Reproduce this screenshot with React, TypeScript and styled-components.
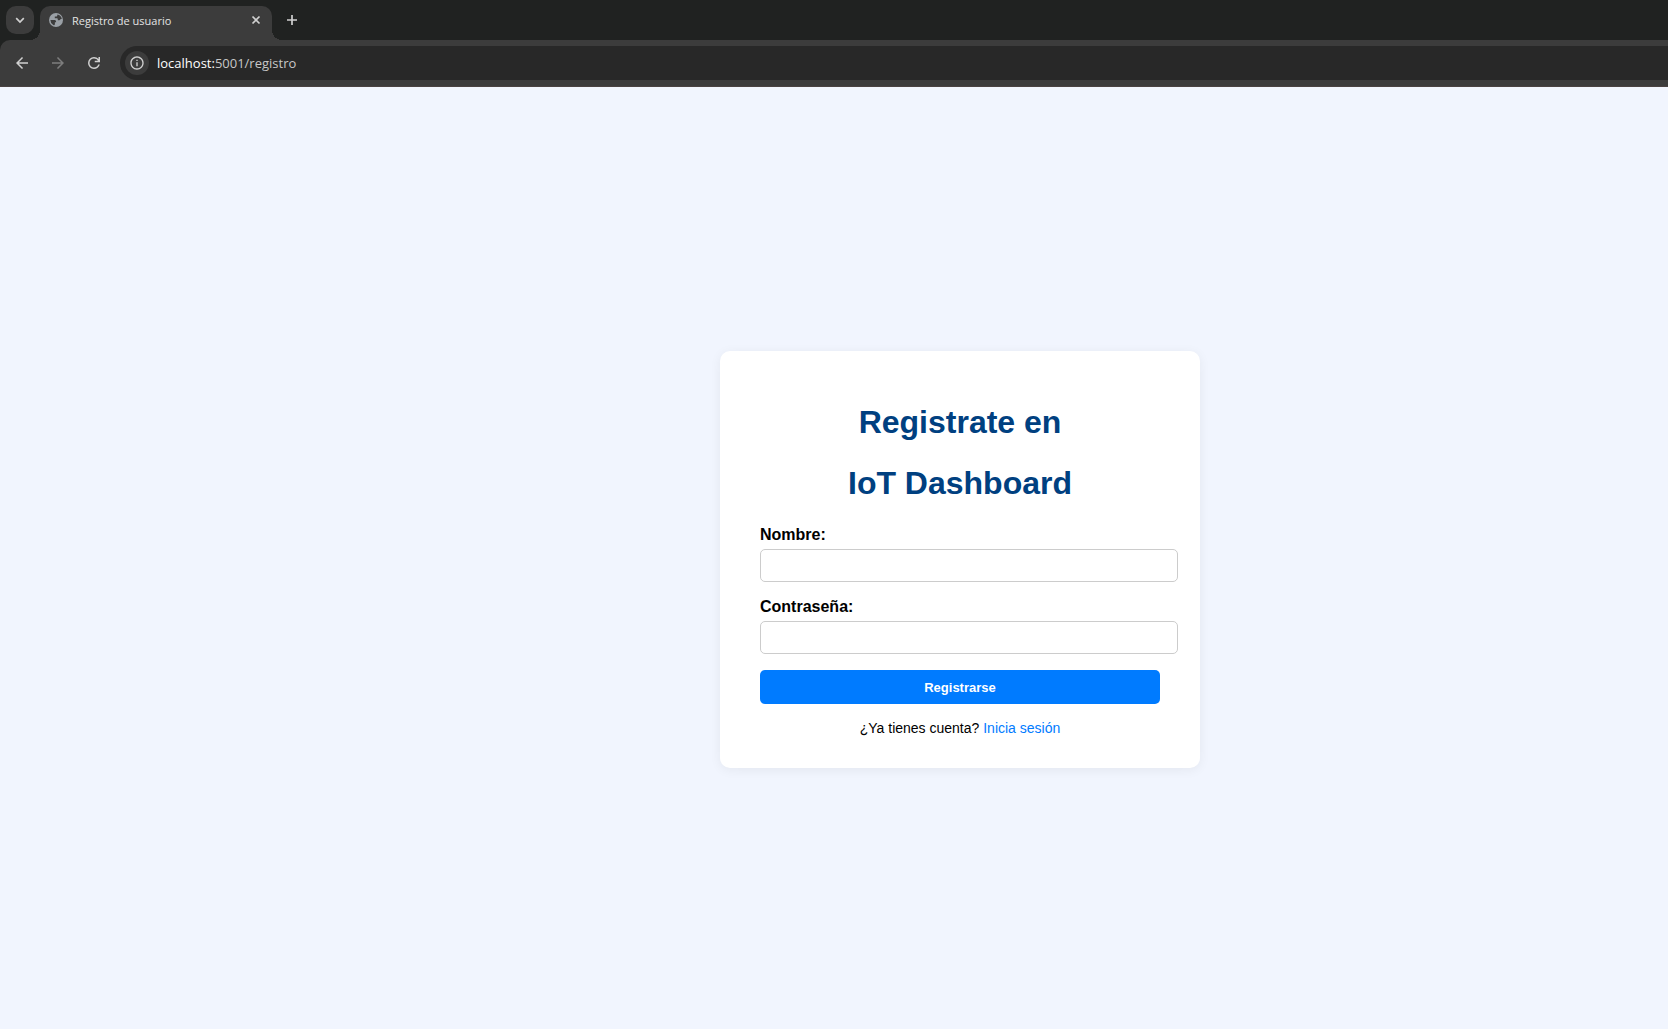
import React from "react";
import styled, { createGlobalStyle } from "styled-components";
import { MdInfoOutline } from "react-icons/md";

const GlobalStyle = createGlobalStyle`
  body {
    margin: 0;
    background: #f1f5fe;
    font-family: "Liberation Sans", Arial, sans-serif;
  }
`;

const Screen = styled.div`
  display: flex;
  flex-direction: column;
  min-height: 100vh;
`;

const Chrome = styled.header`
  background: #202221;
  font-family: "Open Sans", "Noto Sans", sans-serif;
`;

const TabStrip = styled.div`
  display: flex;
  align-items: flex-start;
  gap: 6px;
  height: 34px;
  padding: 6px 6px 0;
`;

const IconButton = styled.button<{ $size?: number; $dim?: boolean; $filled?: boolean }>`
  display: flex;
  align-items: center;
  justify-content: center;
  flex: none;
  width: ${(p) => p.$size ?? 28}px;
  height: ${(p) => p.$size ?? 28}px;
  padding: 0;
  border: 0;
  border-radius: 10px;
  background: ${(p) => (p.$filled ? "#3c3c3c" : "transparent")};
  color: ${(p) => (p.$dim ? "#7d7d7d" : "#d0d0d0")};
`;

const Tab = styled.div`
  position: relative;
  display: flex;
  align-items: center;
  box-sizing: border-box;
  width: 232px;
  height: 34px;
  padding: 0 8px 6px;
  border-radius: 10px 10px 0 0;
  background: #3c3c3c;
  color: #9aa0a6;

  &::before,
  &::after {
    content: "";
    position: absolute;
    bottom: 0;
    width: 10px;
    height: 10px;
  }
  &::before {
    right: 100%;
    background: radial-gradient(circle at 0 0, transparent 10px, #3c3c3c 10px);
  }
  &::after {
    left: 100%;
    background: radial-gradient(circle at 100% 0, transparent 10px, #3c3c3c 10px);
  }
`;

const TabTitle = styled.span`
  flex: 1;
  margin-left: 8px;
  color: #e3e3e3;
  font-size: 11px;
  line-height: 16px;
  padding-top: 2px;
  white-space: nowrap;
`;

const Toolbar = styled.div`
  display: flex;
  align-items: center;
  gap: 8px;
  box-sizing: border-box;
  height: 47px;
  padding: 0 0 1px 8px;
  border-bottom: 1px solid #4a4242;
  border-radius: 10px 0 0 0;
  background: #3c3c3c;
`;

const AddressBar = styled.div`
  display: flex;
  align-items: center;
  flex: 1;
  gap: 8px;
  box-sizing: border-box;
  height: 34px;
  margin-left: 4px;
  padding-left: 5px;
  border-radius: 17px 0 0 17px;
  background: #282828;
`;

const SiteInfo = styled(IconButton)`
  border-radius: 50%;
`;

const Address = styled.span`
  color: #c7c7c7;
  font-size: 13px;
  line-height: 20px;
`;

const Host = styled.span`
  color: #ffffff;
`;

const Page = styled.main`
  display: flex;
  flex: 1;
  align-items: center;
  justify-content: center;
  padding: 3px 0 0 252px;
`;

const Card = styled.section`
  box-sizing: border-box;
  width: 480px;
  padding: 53px 40px 32px;
  border-radius: 10px;
  background: #ffffff;
  box-shadow: 0 2px 12px rgba(0, 0, 0, 0.06);
`;

const Title = styled.h1`
  margin: 0 0 24px;
  color: #004080;
  font-size: 32px;
  line-height: 37px;
  text-align: center;
`;

const Form = styled.form`
  display: flex;
  flex-direction: column;
  gap: 16px;
`;

const Field = styled.div`
  display: flex;
  flex-direction: column;
  align-items: flex-start;
  gap: 5px;
`;

const Label = styled.label`
  font-size: 16px;
  font-weight: bold;
  line-height: 18px;
`;

const TextInput = styled.input`
  box-sizing: content-box;
  width: 100%;
  height: 15px;
  padding: 8px;
  border: 1px solid #cccccc;
  border-radius: 5px;
  background: #ffffff;
  font-family: inherit;
  font-size: 13px;
`;

const SubmitButton = styled.button`
  height: 34px;
  border: 0;
  border-radius: 5px;
  background: #007bff;
  color: #ffffff;
  font-family: inherit;
  font-size: 13px;
  font-weight: bold;
`;

const LoginHint = styled.p`
  margin: 16px 0 0;
  font-size: 14px;
  line-height: 16px;
  text-align: center;
`;

const LoginLink = styled.a`
  color: #007bff;
  text-decoration: none;
`;

const GlobeIcon = () => (
  <svg width="16" height="16" viewBox="0 0 16 16" aria-hidden="true">
    <circle cx="8" cy="8" r="7" fill="#9aa0a6" />
    <path
      d="M2.400 8h3.800c1.300 0 1.900.7 1.900 1.700v.5H6.900v1.700c0 .9-.8 1.500-1.600 1.200A6 6 0 0 1 2.400 8z"
      fill="#3c3c3c"
    />
    <path
      d="M9.300 2.500v.8c0 .8-.5 1.300-1.300 1.300H6.800v1.700h1.900c.7 0 1.100.5 1.100 1.100v.9h1.500c.7 0 1.200-.5 1.200-1.200h1.300A5.600 5.600 0 0 0 9.300 2.500z"
      fill="#3c3c3c"
    />
  </svg>
);

const StrokeIcon = ({ d, size }: { d: string; size: number }) => (
  <svg width={size} height={size} viewBox="0 0 12 12" fill="none" stroke="currentColor" strokeWidth="1.7" aria-hidden="true">
    <path d={d} />
  </svg>
);

const GlyphIcon = ({ d }: { d: string }) => (
  <svg width="18" height="18" viewBox="0 0 24 24" fill="currentColor" aria-hidden="true">
    <path d={d} />
  </svg>
);

const BACK = "m7.825 13l5.6 5.6L12 20l-8-8l8-8l1.425 1.4l-5.6 5.6H20v2z";
const FORWARD = "m16.175 13l-5.6 5.6L12 20l8-8l-8-8l-1.425 1.4l5.6 5.6H4v2z";
const RELOAD =
  "M12 20q-3.35 0-5.675-2.325T4 12t2.325-5.675T12 4q1.725 0 3.3.713T18 6.75V4h2v7h-7V9h4.2q-.8-1.4-2.187-2.2T12 6Q9.5 6 7.75 7.75T6 12t1.75 4.25T12 18q1.925 0 3.475-1.1T17.65 14h2.1q-.7 2.65-2.85 4.325T12 20";

export default function App() {
  return (
    <Screen>
      <GlobalStyle />
      <Chrome>
        <TabStrip>
          <IconButton $filled aria-label="Buscar pestañas">
            <StrokeIcon size={12} d="M2.2 4.2 6 8l3.800-3.800" />
          </IconButton>
          <Tab>
            <GlobeIcon />
            <TabTitle>Registro de usuario</TabTitle>
            <IconButton $size={16} aria-label="Cerrar pestaña">
              <StrokeIcon size={12} d="M2.500 2.500l7 7M9.500 2.500l-7 7" />
            </IconButton>
          </Tab>
          <IconButton aria-label="Nueva pestaña">
            <StrokeIcon size={12} d="M6 1v10M1 6h10" />
          </IconButton>
        </TabStrip>
        <Toolbar>
          <IconButton aria-label="Atrás">
            <GlyphIcon d={BACK} />
          </IconButton>
          <IconButton $dim aria-label="Adelante">
            <GlyphIcon d={FORWARD} />
          </IconButton>
          <IconButton aria-label="Recargar">
            <GlyphIcon d={RELOAD} />
          </IconButton>
          <AddressBar>
            <SiteInfo $size={24} $filled aria-label="Información del sitio">
              <MdInfoOutline size={16} />
            </SiteInfo>
            <Address>
              <Host>localhost:</Host>5001/registro
            </Address>
          </AddressBar>
        </Toolbar>
      </Chrome>
      <Page>
        <Card>
          <Title>Registrate en</Title>
          <Title>IoT Dashboard</Title>
          <Form onSubmit={(e) => e.preventDefault()}>
            <Field>
              <Label htmlFor="nombre">Nombre:</Label>
              <TextInput id="nombre" type="text" />
            </Field>
            <Field>
              <Label htmlFor="clave">Contraseña:</Label>
              <TextInput id="clave" type="password" />
            </Field>
            <SubmitButton type="submit">Registrarse</SubmitButton>
          </Form>
          <LoginHint>
            ¿Ya tienes cuenta? <LoginLink href="#login">Inicia sesión</LoginLink>
          </LoginHint>
        </Card>
      </Page>
    </Screen>
  );
}
